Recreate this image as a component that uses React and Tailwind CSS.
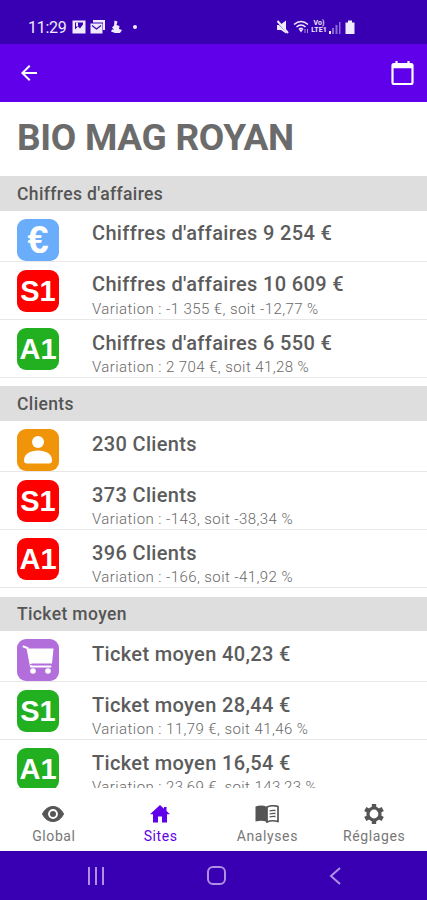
import { MdArrowBack } from 'react-icons/md';

const sections = [
  {
    title: "Chiffres d'affaires",
    icon: 'euro',
    color: 'bg-[#69adfb]',
    total: "Chiffres d'affaires 9 254 €",
    rows: [
      { badge: 'S1', up: false, label: "Chiffres d'affaires 10 609 €", variation: 'Variation : -1 355 €, soit -12,77 %' },
      { badge: 'A1', up: true, label: "Chiffres d'affaires 6 550 €", variation: 'Variation : 2 704 €, soit 41,28 %' },
    ],
  },
  {
    title: 'Clients',
    icon: 'person',
    color: 'bg-[#f09409]',
    total: '230 Clients',
    rows: [
      { badge: 'S1', up: false, label: '373 Clients', variation: 'Variation : -143, soit -38,34 %' },
      { badge: 'A1', up: false, label: '396 Clients', variation: 'Variation : -166, soit -41,92 %' },
    ],
  },
  {
    title: 'Ticket moyen',
    icon: 'cart',
    color: 'bg-[#b26fdb]',
    total: 'Ticket moyen 40,23 €',
    rows: [
      { badge: 'S1', up: true, label: 'Ticket moyen 28,44 €', variation: 'Variation : 11,79 €, soit 41,46 %' },
      { badge: 'A1', up: true, label: 'Ticket moyen 16,54 €', variation: 'Variation : 23,69 €, soit 143,23 %' },
    ],
  },
];

function SectionIcon({ name }) {
  if (name === 'euro') {
    return <span className="pt-px font-['Liberation_Sans',sans-serif] text-[38px] leading-none font-bold">€</span>;
  }
  if (name === 'person') {
    return (
      <svg viewBox="0 0 42 42" className="size-[42px]" fill="currentColor">
        <circle cx="21" cy="13" r="6" />
        <path d="M7 31.500C7 25 13 21.600 21 21.600S35 25 35 31.500c0 2-1 2.900-3 2.900H10c-2 0-3-.9-3-2.900z" />
      </svg>
    );
  }
  return (
    <svg viewBox="0 0 42 42" className="size-[42px]" fill="currentColor">
      <path d="M11 9.500h25.500l-1.500 15H13.500z" />
      <path d="M6.500 7.500l4 1.500 3.500 18.500h19.500" fill="none" stroke="currentColor" strokeWidth="2" strokeLinecap="round" />
      <path d="M13 25.600h21" stroke="#b26fdb" strokeWidth="1" />
      <circle cx="16" cy="32" r="2.800" />
      <circle cx="31" cy="32" r="2.800" />
    </svg>
  );
}

function Row({ children, label, variation, color }) {
  return (
    <div className={`flex border-b border-[#e8e8e8] pl-[17px] ${variation ? 'h-[58.300px]' : 'h-[51px]'}`}>
      <div className={`mt-[8px] flex size-[42px] shrink-0 items-center justify-center overflow-hidden rounded-[9px] text-white ${color}`}>
        {children}
      </div>
      <div className="ml-[33px] whitespace-nowrap">
        <p className="mt-[10.900px] text-[20px] leading-[24px] font-medium tracking-[0.35px] text-[#5c5c5c]">{label}</p>
        {variation && <p className="mt-[4.200px] text-[15px] leading-[16px] font-light tracking-[0.430px] text-[#686868]">{variation}</p>}
      </div>
    </div>
  );
}

function Section({ section }) {
  return (
    <section className="h-[210.300px]">
      <h2 className="flex h-[34.500px] items-center bg-[#dedede] pt-[1px] pl-[17px] text-[17.500px] font-medium tracking-[0.370px] text-[#555]">
        {section.title}
      </h2>
      <Row label={section.total} color={section.color}>
        <SectionIcon name={section.icon} />
      </Row>
      {section.rows.map((row) => (
        <Row key={row.badge} label={row.label} variation={row.variation} color={row.up ? 'bg-[#22b020]' : 'bg-[#fe0000]'}>
          <span className="pt-px font-['Liberation_Sans',sans-serif] text-[29px] leading-none font-bold">{row.badge}</span>
        </Row>
      ))}
    </section>
  );
}

function StatusBar() {
  return (
    <div className="flex h-[44px] shrink-0 items-center bg-[#3900b3] pt-[10px] pl-[28px] text-[#f0eaff]">
      <span className="w-[44px] pt-[2px] text-[16px] tracking-[-0.3px]">11:29</span>
      <svg width="68" height="14" viewBox="0 0 68 14" fill="currentColor">
        <path fillRule="evenodd" d="M.500.5h13v13H.5zM3 2.500v7l3-3 2 2 3-4v-2z" />
        <path d="M4 2.500h2v4H4z" />
        <path d="M21 0h12v10h-2V2.500H21z" />
        <path d="M18.500 3.500h12v10h-12z" />
        <path d="M20 5.500l4.500 3.500L29 5.500" fill="none" stroke="#3900b3" strokeWidth="1.200" />
        <path d="M42.500.5l3 1-1 3.500 3 1-.5 3 3 1-2 3h-5l-4-1.500 1-2h2l-2-2 2-2z" />
        <circle cx="63" cy="7" r="2" />
      </svg>
      <div className="ml-[136px] flex items-center">
        <svg width="34" height="15" viewBox="0 0 34 15" fill="currentColor">
          <path d="M1 5h3l6-4.500v13L5 10H1z" />
          <path d="M0 1l12 12" stroke="#3900b3" strokeWidth="1.500" />
          <path d="M1.500 1l10.500 12" stroke="currentColor" strokeWidth="2" />
          <g fill="none" stroke="currentColor" strokeWidth="1.600">
            <path d="M18 4.500q7-6 14 0M20.500 7q4.500-4 9 0M23 9.500q2-2.500 4 0" />
            <path d="M29 13V9M31.500 9v4" strokeWidth="1" opacity=".6" />
          </g>
          <path d="M23 9.500l2 3 2-3z" />
        </svg>
        <div className="flex w-[18px] flex-col items-center text-[7px] leading-[7px] font-bold">
          <span>Vo)</span>
          <span>LTE1</span>
        </div>
        <svg width="28" height="15" viewBox="53 0 28 15" fill="currentColor">
          <path d="M54 11h2v3h-2z" />
          <path d="M57 8h2v6h-2zM60.500 5h2v9h-2zM64 2h1.500v12H64z" opacity=".45" />
          <path d="M70.500 2.500h2.500V.5h4v2h2.500V14h-9z" />
        </svg>
      </div>
    </div>
  );
}

function EyeIcon() {
  return (
    <svg width="24" height="18" viewBox="0 0 24 18" fill="none" stroke="currentColor">
      <path d="M1.500 9C6-1 18-1 22.500 9 18 19 6 19 1.500 9z" fill="currentColor" />
      <circle cx="12" cy="9" r="4.300" fill="#fff" stroke="#fff" strokeWidth="1.200" />
      <circle cx="12" cy="9" r="3" fill="currentColor" stroke="none" />
    </svg>
  );
}

function HouseIcon() {
  return (
    <svg width="20" height="18" viewBox="0 0 20 18" fill="currentColor">
      <path d="M10 0l4 3.700V2h2.500v4L20 9.200h-3V17.500h-5V11.500H8v6H3V9.200H0z" />
    </svg>
  );
}

function BookIcon() {
  return (
    <svg width="24" height="18" viewBox="0 0 24 18">
      <path d="M.5 1.500Q7-.5 12 2v15Q7 14.800.5 16.500z" fill="currentColor" />
      <path d="M12 2q5-2.200 11-.5v15q-6-1.700-11 .5z" fill="none" stroke="currentColor" strokeWidth="1.700" />
      <path d="M14.500 6q3-1 6-.5M14.500 9q3-1 6-.5M14.500 12q3-1 6-.5" fill="none" stroke="currentColor" strokeWidth="1.300" />
    </svg>
  );
}

function GearIcon() {
  return (
    <svg width="20" height="20" viewBox="0 0 20 20" fill="none" stroke="currentColor">
      <circle cx="10" cy="10" r="6" strokeWidth="3.200" />
      <path d="M10 0v4M10 16v4M1.300 5l3.500 2M15.200 13l3.500 2M1.300 15l3.500-2M15.200 7l3.500-2" strokeWidth="4.400" />
    </svg>
  );
}

const tabs = [
  { label: 'Global', icon: <EyeIcon /> },
  { label: 'Sites', icon: <HouseIcon />, active: true },
  { label: 'Analyses', icon: <BookIcon /> },
  { label: 'Réglages', icon: <GearIcon /> },
];

function App() {
  return (
    <div className="flex h-[900px] w-[427px] flex-col overflow-hidden bg-white font-[Roboto,sans-serif]">
      <StatusBar />

      {/* App bar */}
      <header className="flex h-[58px] shrink-0 items-center justify-between bg-[#6000ea] pr-[13px] pl-[17px] text-white">
        <MdArrowBack size={24} />
        <svg width="23" height="24" viewBox="0 0 23 24" fill="none" stroke="currentColor">
          <rect x="1.500" y="3" width="20" height="20" rx="1.500" strokeWidth="2.200" />
          <path d="M1.500 5h20" strokeWidth="4.500" />
          <path d="M5.500 0v4M17.500 0v4" strokeWidth="2.200" />
        </svg>
      </header>

      <main className="min-h-0 flex-1 overflow-hidden">
        <h1 className="flex h-[74px] items-center pb-[3px] pl-[17px] text-[37px] font-bold tracking-[-0.3px] text-[#6b6b6b]">BIO MAG ROYAN</h1>
        {sections.map((section) => (
          <Section key={section.title} section={section} />
        ))}
      </main>

      {/* Bottom tabs */}
      <nav className="grid h-[63px] shrink-0 grid-cols-4 bg-white pt-[8px]">
        {tabs.map((tab) => (
          <div key={tab.label} className={`flex flex-col items-center ${tab.active ? 'text-[#6000ea]' : 'text-[#555]'}`}>
            <div className="flex h-[36px] items-center">{tab.icon}</div>
            <span className={`-mt-[4px] pl-[1px] text-[14px] leading-[16px] tracking-[0.6px] ${tab.active ? '' : 'text-[#777]'}`}>{tab.label}</span>
          </div>
        ))}
      </nav>

      {/* System navigation */}
      <div className="flex h-[49px] shrink-0 items-center justify-between bg-[#3900b3] pr-[85px] pl-[87px] text-[#ae91e4]">
        <svg width="18" height="18" viewBox="0 0 18 18" stroke="currentColor" strokeWidth="2">
          <path d="M2 0v18M9 0v18M16 0v18" />
        </svg>
        <svg width="20" height="19" viewBox="0 0 20 19" fill="none" stroke="currentColor" strokeWidth="2">
          <rect x="1" y="1" width="17" height="17" rx="5" />
        </svg>
        <svg width="14" height="18" viewBox="0 0 14 18" fill="none" stroke="currentColor" strokeWidth="2">
          <path d="M12 1L3 9l9 8" />
        </svg>
      </div>
    </div>
  );
}

export default App;
